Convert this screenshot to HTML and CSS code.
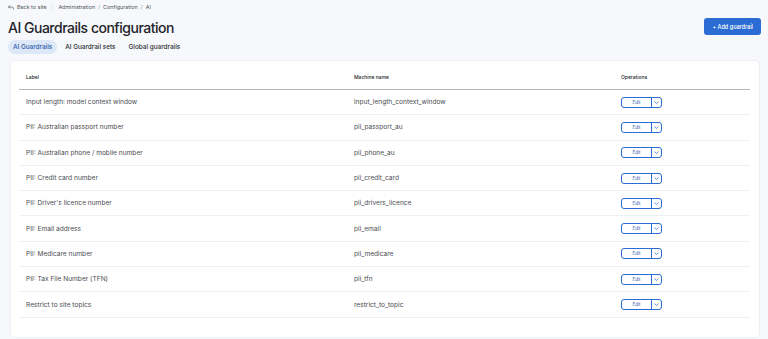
FILE: index.html
```html
<!DOCTYPE html>
<html lang="en">
<head>
  <meta charset="UTF-8">
  <meta name="viewport" content="width=device-width, initial-scale=1.0">
  <title>AI Guardrails configuration</title>
  <link rel="stylesheet" href="styles.css">
</head>
<body>
  <div class="page">
    <nav class="breadcrumb">
      <a class="back" href="#">
        <svg width="6" height="5" viewBox="0 0 12 10" fill="none" stroke="#555" stroke-width="1.4"><path d="M4 1 1 4l3 3"/><path d="M1 4h6a4 4 0 0 1 4 4v1"/></svg>
        Back to site
      </a>
      <span class="sep">|</span>
      <a href="#">Administration</a>
      <span class="slash">/</span>
      <a href="#">Configuration</a>
      <span class="slash">/</span>
      <a href="#">AI</a>
    </nav>

    <div class="header">
      <h1>AI Guardrails configuration</h1>
      <button class="primary">+ Add guardrail</button>
    </div>

    <div class="tabs">
      <a class="tab active" href="#">AI Guardrails</a>
      <a class="tab" href="#">AI Guardrail sets</a>
      <a class="tab" href="#">Global guardrails</a>
    </div>

    <div class="card">
      <table>
        <thead>
          <tr>
            <th class="col-label">Label</th>
            <th class="col-machine">Machine name</th>
            <th>Operations</th>
          </tr>
        </thead>
        <tbody id="rows"></tbody>
      </table>
    </div>
  </div>

  <script>
    const guardrails = [
      ["Input length: model context window", "input_length_context_window"],
      ["PII: Australian passport number", "pii_passport_au"],
      ["PII: Australian phone / mobile number", "pii_phone_au"],
      ["PII: Credit card number", "pii_credit_card"],
      ["PII: Driver's licence number", "pii_drivers_licence"],
      ["PII: Email address", "pii_email"],
      ["PII: Medicare number", "pii_medicare"],
      ["PII: Tax File Number (TFN)", "pii_tfn"],
      ["Restrict to site topics", "restrict_to_topic"]
    ];

    const tbody = document.getElementById('rows');
    guardrails.forEach(([label, machine]) => {
      const row = document.createElement('tr');
      row.innerHTML = `
        <td>${label}</td>
        <td>${machine}</td>
        <td>
          <div class="split">
            <button class="split-main">Edit</button>
            <button class="split-toggle">
              <svg width="5" height="3" viewBox="0 0 10 6" fill="none" stroke="#2b6fd6" stroke-width="1.5"><path d="M1 1l4 4 4-4"/></svg>
            </button>
          </div>
        </td>
      `;
      tbody.appendChild(row);
    });
  </script>
</body>
</html>
```

FILE: styles.css
```css
body {
  margin: 0;
  background: #f6f8fc;
  font-family: Inter, "Noto Sans", sans-serif;
  color: #232429;
}
.page {
  padding: 4px 8px 0 8px;
}
.breadcrumb {
  display: flex;
  align-items: center;
  gap: 3px;
  font-size: 5.4px;
  color: #55565b;
  height: 6px;
}
.breadcrumb a {
  color: #55565b;
  text-decoration: none;
}
.breadcrumb .back {
  display: flex;
  align-items: center;
  gap: 3px;
}
.breadcrumb .sep {
  color: #d0d2d8;
  margin: 0 2px;
}
.breadcrumb .slash {
  color: #999;
}
.header {
  display: flex;
  justify-content: space-between;
  align-items: center;
  margin-top: 6px;
}
h1 {
  margin: 0;
  padding-top: 3px;
  font-size: 14px;
  font-weight: 500;
  letter-spacing: -0.035em;
  line-height: 18px;
}
.primary {
  background: #2b6cd4;
  color: #ffffff;
  border: none;
  border-radius: 3px;
  font-family: inherit;
  font-size: 5.5px;
  font-weight: 500;
  height: 17px;
  padding: 0 8px;
  margin-right: -1px;
}
.tabs {
  display: flex;
  gap: 3px;
  margin-top: 3px;
}
.tab {
  font-size: 6.4px;
  font-weight: 500;
  color: #2a2b30;
  text-decoration: none;
  padding: 3px 5px;
  border-radius: 7px;
}
.tab.active {
  background: #dce7f8;
  color: #2b5aa8;
}
.card {
  margin: 6px 0 0 2px;
  background: #ffffff;
  border: 1px solid #edeef2;
  border-radius: 5px;
  padding: 0 9px 18px 8px;
  height: 258px;
}
table {
  width: 100%;
  border-collapse: collapse;
}
th {
  text-align: left;
  font-size: 5px;
  font-weight: 500;
  color: #232429;
  height: 25px;
  padding: 3px 0 0 7px;
  vertical-align: middle;
  border-bottom: 1px solid #b5b7bd;
}
.col-label {
  width: 321px;
}
.col-machine {
  width: 260px;
}
td {
  font-size: 6.6px;
  color: #4a4b50;
  height: 24.3px;
  padding: 0 0 0 7px;
  border-bottom: 1px solid #eef0f3;
}
.split {
  display: flex;
  width: 41px;
  height: 11px;
  border: 1px solid #2b6cd4;
  border-radius: 3px;
  box-sizing: border-box;
}
.split button {
  background: none;
  border: none;
  padding: 0;
  font-family: inherit;
}
.split-main {
  flex: 1;
  font-size: 4.5px;
  color: #2b5aa8;
}
.split-toggle {
  width: 10px;
  border-left: 1px solid #2b6cd4 !important;
  display: flex;
  align-items: center;
  justify-content: center;
}
```
